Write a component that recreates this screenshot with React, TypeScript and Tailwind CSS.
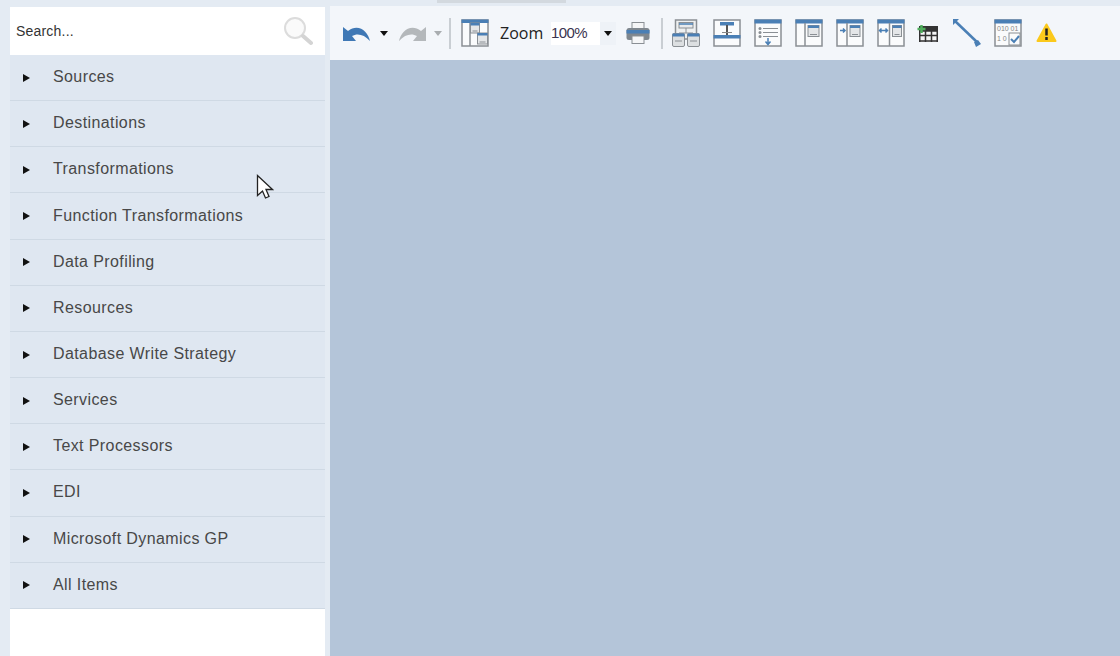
import { ReactNode } from 'react';

const categories = [
    'Sources',
    'Destinations',
    'Transformations',
    'Function Transformations',
    'Data Profiling',
    'Resources',
    'Database Write Strategy',
    'Services',
    'Text Processors',
    'EDI',
    'Microsoft Dynamics GP',
    'All Items',
];

const BLUE = '#4a7fb5';
const GREY = '#8a8f94';

function Frame({ children }: { children: ReactNode }) {
    return (
        <svg width="28" height="28" viewBox="0 0 28 28" className="shrink-0">
            <rect x="1" y="1" width="26" height="26" fill="#fafbfc" stroke={GREY} strokeWidth="1.5" />
            <rect x="0.5" y="0.5" width="27" height="4" fill={BLUE} />
            {children}
        </svg>
    );
}

function Caret({ color = '#111' }: { color?: string }) {
    return (
        <svg width="8" height="5" viewBox="0 0 8 5" className="shrink-0">
            <path d="M0 0h8L4 5z" fill={color} />
        </svg>
    );
}

function Undo() {
    return (
        <svg width="28" height="18" viewBox="0 0 28 18" className="shrink-0">
            <path d="M0 3v14h13l-4-5c5-3 12-2 18 5C25 7 15-1 5 7z" fill="#3f78b5" />
        </svg>
    );
}

function Redo() {
    return (
        <svg width="28" height="18" viewBox="0 0 28 18" className="shrink-0">
            <path d="M28 3v14H15l4-5c-5-3-12-2-18 5C3 7 13-1 23 7z" fill="#b4b8bb" />
        </svg>
    );
}

function Separator() {
    return <div className="h-[31px] w-[2px] shrink-0 bg-[#c9ced3]" />;
}

function SmallBox({ x, y, w = 8, h = 7 }: { x: number; y: number; w?: number; h?: number }) {
    return (
        <g>
            <rect x={x} y={y} width={w} height={h} fill="#e4e6e8" stroke={GREY} />
            <rect x={x} y={y} width={w} height="2.500" fill={BLUE} />
            <path d={`M${x + 2} ${y + h - 2}h${w - 4}`} stroke={GREY} />
        </g>
    );
}

function Printer() {
    return (
        <svg width="24" height="22" viewBox="0 0 24 22" className="shrink-0">
            <rect x="6" y="0.500" width="12" height="7" fill="#f5f6f7" stroke={GREY} />
            <rect x="0.500" y="6" width="23" height="12" rx="2.500" fill="#7f878e" />
            <rect x="0.500" y="8" width="23" height="3.500" fill={BLUE} />
            <rect x="6" y="14" width="12" height="7.500" fill="#f5f6f7" stroke={GREY} />
        </svg>
    );
}

function HierarchyIcon() {
    return (
        <svg width="28" height="28" viewBox="0 0 28 28" className="shrink-0">
            <rect x="3.500" y="1" width="21" height="19" fill="#eef0f1" stroke={GREY} strokeWidth="1.5" />
            <rect x="7" y="3.500" width="14" height="5.500" fill="#e8eaec" stroke={GREY} />
            <path d="M7 5h14" stroke={BLUE} strokeWidth="1.500" />
            <path d="M14 9v5M7 14h14" stroke={GREY} />
            <rect x="0.500" y="14.500" width="12" height="13" rx="1.500" fill="#dcdfe1" stroke={GREY} />
            <rect x="0.500" y="14.500" width="12" height="3" fill={BLUE} />
            <rect x="15.500" y="14.500" width="12" height="13" rx="1.500" fill="#dcdfe1" stroke={GREY} />
            <rect x="15.500" y="14.500" width="12" height="3" fill={BLUE} />
            <path d="M3 22h7M18 22h7" stroke={GREY} />
        </svg>
    );
}

function SplitIcon() {
    return (
        <svg width="28" height="28" viewBox="0 0 28 28" className="shrink-0">
            <rect x="1" y="1" width="26" height="26" fill="#fafbfc" stroke={GREY} strokeWidth="1.5" />
            <rect x="7" y="3" width="14" height="3.500" fill={BLUE} />
            <path d="M14 6v10" stroke="#555" strokeWidth="2" />
            <path d="M9 13.500h10" stroke="#888" />
            <rect x="0.500" y="16" width="27" height="3.500" fill={BLUE} />
        </svg>
    );
}

function ToolbarIcons() {
    return (
        <>
            <HierarchyIcon />
            <SplitIcon />
            <Frame>
                <circle cx="6" cy="9.500" r="1.500" fill={GREY} />
                <circle cx="6" cy="13.500" r="1.500" fill={GREY} />
                <circle cx="6" cy="17.500" r="1.500" fill={GREY} />
                <path d="M9 9.500h15M9 13.500h15M9 17.500h15" stroke={GREY} />
                <path d="M14 19v6M11.500 22.500l2.500 3 2.500-3" stroke={BLUE} strokeWidth="1.500" fill="none" />
            </Frame>
            <Frame>
                <path d="M10 4v23" stroke={GREY} strokeWidth="1.500" />
                <SmallBox x={13} y={6.500} w={11} h={11} />
            </Frame>
            <Frame>
                <path d="M11 4v23" stroke={GREY} strokeWidth="1.500" />
                <SmallBox x={14} y={6.500} w={10} h={11} />
                <path d="M4 11.500h5M7 9.500l2 2-2 2" stroke={BLUE} strokeWidth="1.500" fill="none" />
            </Frame>
            <Frame>
                <path d="M12.500 4v23" stroke={GREY} strokeWidth="1.500" />
                <SmallBox x={15.500} y={6.500} w={9} h={11} />
                <path d="M2.500 11.500h8M8.500 9.500l2 2-2 2M4.500 9.500l-2 2 2 2" stroke={BLUE} strokeWidth="1.500" fill="none" />
            </Frame>
        </>
    );
}

function TableAdd() {
    return (
        <svg width="21" height="17" viewBox="0 0 21 17" className="shrink-0">
            <rect x="2" y="1" width="19" height="16" fill="#f4f5f6" />
            <rect x="2" y="1" width="19" height="5" fill="#333" />
            <path d="M2 6h19M2 10.500h19M2 16h19M2.750 5v12M8.500 5v12M14.500 5v12M20.250 5v12" stroke="#333" strokeWidth="1.500" />
            <path d="M4.500 0v8M0.500 4h8" stroke="#4fae5c" strokeWidth="2.500" />
        </svg>
    );
}

function Connector() {
    return (
        <svg width="28" height="28" viewBox="0 0 28 28" className="shrink-0">
            <path d="M2 2l23 22" stroke={BLUE} strokeWidth="2.500" />
            <path d="M0 0h6L0 6zM28 25l-5 3-2-5 4-2z" fill={BLUE} />
        </svg>
    );
}

function Warning() {
    return (
        <svg width="21" height="20" viewBox="0 0 21 20" className="shrink-0">
            <path d="M10.500 1.500l9 16.500H1.500z" fill="#fbc91c" stroke="#fbc91c" strokeWidth="2" strokeLinejoin="round" />
            <path d="M10.500 5.500v7M10.500 14v3" stroke="#222" strokeWidth="2.500" />
        </svg>
    );
}

function CursorArrow() {
    return (
        <svg width="18" height="26" viewBox="0 0 18 26" className="absolute left-[256px] top-[174px]">
            <path d="M1.500 1.500v20l5-4.500 3 7 3.500-1.500-3-7h6.500z" fill="#fff" stroke="#222" strokeWidth="1.300" />
        </svg>
    );
}

export default function App() {
    return (
        <div className="relative flex h-[656px] w-[1120px] flex-col overflow-hidden bg-[#e4ebf3] font-['Liberation_Sans',sans-serif]">
            <div className="flex h-[6px] shrink-0 items-start pl-[437px]">
                <div className="h-[3px] w-[129px] bg-[#d3d9df]" />
            </div>
            <div className="flex min-h-0 flex-1 pl-[10px]">
                <aside className="mt-[1px] flex w-[315px] shrink-0 flex-col bg-white">
                    <div className="flex h-[48px] shrink-0 items-center justify-between pl-[6px] pr-[12px]">
                        <span className="text-[14px] tracking-[0.2px] text-[#333]">Search...</span>
                        <svg width="30" height="30" viewBox="0 0 30 30">
                            <circle cx="12" cy="12" r="10" fill="#fafafa" stroke="#dcdcdc" strokeWidth="2" />
                            <path d="M20 20l8 7" stroke="#d4d4d4" strokeWidth="4" strokeLinecap="round" />
                        </svg>
                    </div>
                    {categories.map((name) => (
                        <div
                            key={name}
                            className="flex h-[46.17px] shrink-0 items-center border-b border-[#cfd9e4] bg-[#dfe7f1] pb-[1px] pl-[13px]"
                        >
                            <svg width="7" height="8" viewBox="0 0 7 8" className="mt-[1px] shrink-0">
                                <path d="M0 0l7 4-7 4z" fill="#111" />
                            </svg>
                            <span className="ml-[23px] text-[16px] tracking-[0.4px] text-[#484848]">{name}</span>
                        </div>
                    ))}
                </aside>
                <main className="ml-[5px] flex min-w-0 flex-1 flex-col">
                    <div className="flex h-[54px] shrink-0 items-center bg-[#f3f6fa] pl-[13px]">
                        <Undo />
                        <div className="ml-[9px]"><Caret /></div>
                        <div className="ml-[10px]"><Redo /></div>
                        <div className="ml-[8px]"><Caret color="#a9adb0" /></div>
                        <div className="ml-[7px]"><Separator /></div>
                        <svg width="28" height="28" viewBox="0 0 28 28" className="ml-[10px] shrink-0">
                            <rect x="1" y="1" width="26" height="26" fill="#fafbfc" stroke={GREY} strokeWidth="1.5" />
                            <rect x="0.5" y="0.5" width="27" height="3.5" fill={BLUE} />
                            <path d="M9 4v23" stroke={GREY} strokeWidth="1.5" />
                            <SmallBox x={9.500} y={4} w={9} h={10} />
                            <SmallBox x={16.500} y={14} w={10} h={11} />
                        </svg>
                        <span className="-mt-[1px] ml-[11px] w-[44px] font-['Open_Sans',sans-serif] text-[16px] text-[#222]">Zoom</span>
                        <div className="ml-[7px] flex h-[23px] w-[65px] items-center justify-between bg-white">
                            <span className="text-[15px] tracking-[-0.6px] text-[#3a3450]">100%</span>
                            <div className="flex h-full w-[16px] items-center justify-center bg-[#eef2f7]">
                                <Caret />
                            </div>
                        </div>
                        <div className="ml-[10px]"><Printer /></div>
                        <div className="ml-[11px]"><Separator /></div>
                        <div className="ml-[9px] flex items-center gap-[13px]">
                            <ToolbarIcons />
                        </div>
                        <div className="ml-[12px]"><TableAdd /></div>
                        <div className="ml-[15px]"><Connector /></div>
                        <div className="ml-[13px]">
                            <Frame>
                                <text x="3" y="12" fontSize="7" fill="#888" fontFamily="Liberation Sans">010 01</text>
                                <text x="3" y="22" fontSize="7" fill="#888" fontFamily="Liberation Sans">1 0</text>
                                <rect x="15" y="14" width="11" height="12" fill="#fafbfc" stroke={GREY} />
                                <path d="M17 20l3 3 5-6" stroke={BLUE} strokeWidth="2" fill="none" />
                            </Frame>
                        </div>
                        <div className="ml-[14px]"><Warning /></div>
                    </div>
                    <div className="flex-1 bg-[#b4c5d9]" />
                </main>
            </div>
            <CursorArrow />
        </div>
    );
}
